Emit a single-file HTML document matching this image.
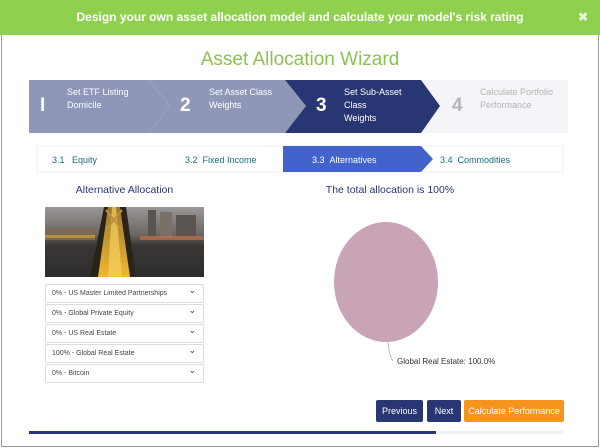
<!DOCTYPE html>
<html><head><meta charset="utf-8"><style>
*{margin:0;padding:0;box-sizing:border-box}
body{width:600px;height:448px;overflow:hidden;background:#fff;font-family:"Liberation Sans",sans-serif;position:relative}
.modal{position:absolute;left:1px;top:0;width:598px;height:447px;border:1px solid #9a9a9a;border-top:none;background:#fff}
.top{position:absolute;left:0;top:0;width:600px;height:35px;background:#8fd14f;color:#fff;font-size:12px;font-weight:bold;text-align:center;line-height:35px}
.x{position:absolute;right:12px;top:0;color:#e6f5d8;font-size:12px}
h1{position:absolute;left:0;width:600px;top:49px;text-align:center;color:#8cc152;font-weight:normal;font-size:19px}
.abs{position:absolute}
.st{position:absolute;font-size:9px;line-height:13px}
.num{position:absolute;font-size:19px;font-weight:bold}
.sub{position:absolute;font-size:9px;color:#1a6d82;top:155px}
.sel{position:absolute;left:45px;width:159px;height:19px;border:1px solid #dcdcdc;border-radius:2px;font-size:7px;color:#444;padding-left:6px;line-height:17px;background:#fff}
.sel:after{content:"⌄";position:absolute;right:7px;top:-3px;font-size:9px;color:#333}
.btn{position:absolute;top:400px;height:22px;color:#fff;font-size:9px;line-height:22px;text-align:center;border-radius:2px}
</style></head><body>
<div class="modal"></div>
<div class="top">Design your own asset allocation model and calculate your model's risk rating<span class="x">✖</span></div>
<h1>Asset Allocation Wizard</h1>
<svg class="abs" style="left:0;top:0" width="600" height="448">
<rect x="29" y="80" width="539" height="53" fill="#f4f5f8"/>
<polygon points="29,80 285,80 306,106 285,133 29,133" fill="#8e97b8"/>
<polyline points="149,80 170,106 149,133" fill="none" stroke="#9aa2c0" stroke-width="1"/>
<polygon points="285,80 421,80 440,106 421,133 285,133 306,106" fill="#283673"/>
<rect x="37" y="146" width="526" height="26" fill="#fff" stroke="#eceef2"/>
<polygon points="283,146 421,146 433,159 421,172 283,172" fill="#4263cc"/>
<rect x="29" y="431" width="407" height="3" fill="#283673"/>
<rect x="436" y="431" width="127" height="3" fill="#eef0f4"/>
<ellipse cx="386" cy="282" rx="52" ry="60" fill="#c9a3b6"/>
<path d="M388,342 Q389,355 393,361" fill="none" stroke="#bbb"/>
<defs><linearGradient id="sky" x1="0" y1="0" x2="0" y2="1"><stop offset="0" stop-color="#9a9898"/><stop offset="0.4" stop-color="#6a6560"/><stop offset="0.55" stop-color="#3a3634"/><stop offset="1" stop-color="#2e2c2e"/></linearGradient>
<linearGradient id="road" x1="0" y1="0" x2="0" y2="1"><stop offset="0" stop-color="#9a7a30"/><stop offset="1" stop-color="#f0b830"/></linearGradient></defs>
<rect x="45" y="207" width="159" height="70" fill="url(#sky)"/>
<rect x="45" y="228" width="50" height="12" fill="#7a6a55"/>
<rect x="45" y="235" width="50" height="3" fill="#d0a040" opacity=".7"/>
<rect x="148" y="210" width="8" height="28" fill="#5a5550"/>
<rect x="160" y="212" width="12" height="26" fill="#7a7068"/>
<rect x="176" y="215" width="20" height="24" fill="#5a5550"/>
<rect x="140" y="236" width="64" height="4" fill="#c07050" opacity=".7"/>
<polygon points="90,277 104,207 126,207 136,277" fill="#2a2418"/>
<polygon points="98,277 108,207 120,207 130,277" fill="url(#road)"/>
<polygon points="108,277 112,207 116,207 122,277" fill="#f8d060" opacity=".7"/>
<path d="M106,210 L122,230 M122,210 L106,230" stroke="#c09040" stroke-width="2"/>
</svg>
<div class="num" style="left:40px;top:95px;color:#fff">I</div>
<div class="st" style="left:67px;top:86px;color:#fff">Set ETF Listing<br>Domicile</div>
<div class="num" style="left:180px;top:95px;color:#fff">2</div>
<div class="st" style="left:209px;top:86px;color:#fff">Set Asset Class<br>Weights</div>
<div class="num" style="left:316px;top:95px;color:#fff">3</div>
<div class="st" style="left:344px;top:86px;color:#fff">Set Sub-Asset<br>Class<br>Weights</div>
<div class="num" style="left:452px;top:95px;color:#b5b5b5">4</div>
<div class="st" style="left:480px;top:86px;color:#b5b5b5">Calculate Portfolio<br>Performance</div>
<div class="sub" style="left:52px">3.1&nbsp;&nbsp; Equity</div>
<div class="sub" style="left:185px">3.2&nbsp;&nbsp;Fixed Income</div>
<div class="sub" style="left:312px;color:#fff">3.3&nbsp;&nbsp;Alternatives</div>
<div class="sub" style="left:440px">3.4&nbsp;&nbsp;Commodities</div>
<div class="abs" style="left:45px;width:159px;top:184px;text-align:center;font-size:10.5px;color:#283673">Alternative Allocation</div>
<div class="abs" style="left:300px;width:180px;top:184px;text-align:center;font-size:10.5px;color:#283673">The total allocation is 100%</div>
<div class="sel" style="top:284px">0% - US Master Limited Partnerships</div>
<div class="sel" style="top:304px">0% - Global Private Equity</div>
<div class="sel" style="top:324px">0% - US Real Estate</div>
<div class="sel" style="top:344px">100% - Global Real Estate</div>
<div class="sel" style="top:364px">0% - Bitcoin</div>
<div class="abs" style="left:397px;top:357px;font-size:8px;color:#333">Global Real Estate: 100.0%</div>
<div class="btn" style="left:376px;width:47px;background:#283673">Previous</div>
<div class="btn" style="left:427px;width:34px;background:#283673">Next</div>
<div class="btn" style="left:464px;width:100px;background:#f7941d">Calculate Performance</div>
</body></html>
